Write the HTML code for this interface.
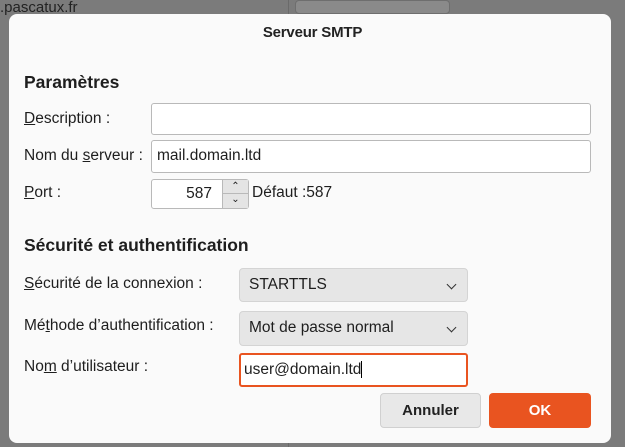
<!DOCTYPE html>
<html><head><meta charset="utf-8"><style>
*{box-sizing:border-box;margin:0;padding:0}
body{width:625px;height:447px;overflow:hidden;background:#7b7b7b;font-family:"Liberation Sans",sans-serif;color:#1e1e1e;position:relative}
.a{position:absolute;white-space:nowrap}
.dlg{position:absolute;left:9px;top:14px;width:602px;height:429px;background:#fafafa;border-radius:8px}
.lab{font-size:15.5px}
.in{position:absolute;background:#fff;border:1px solid #b9b9b9;border-radius:3px;font-size:15.5px;padding-left:5px;line-height:30px}
.sel{position:absolute;background:#e6e6e6;border:1px solid #d4d4d4;border-radius:4px;font-size:15.5px;padding-left:9px;line-height:32px}
.chev{position:absolute;right:12px;top:12px;width:7px;height:7px;border-right:1.2px solid #333;border-bottom:1.2px solid #333;transform:rotate(45deg)}
u{text-decoration:underline}
</style></head><body>
<div class="a" style="left:0;top:-1px;font-size:15px;color:#222">.pascatux.fr</div>
<div class="a" style="left:295px;top:0;width:155px;height:14px;background:#8a8a8a;border-radius:4px;border:1px solid #6e6e6e"></div>
<div class="a" style="left:288px;top:0;width:1px;height:447px;background:#6a6a6a"></div>
<div class="dlg"></div>
<div class="a" style="left:0;width:625px;text-align:center;top:24px;font-size:15px;font-weight:bold;color:#222;letter-spacing:-0.2px">Serveur SMTP</div>
<div class="a" style="left:24px;top:72px;font-size:17.5px;font-weight:bold">Paramètres</div>
<div class="a lab" style="left:24px;top:110px"><u>D</u>escription :</div>
<div class="in" style="left:151px;top:103px;width:440px;height:32px"></div>
<div class="a lab" style="left:24px;top:147px">Nom du <u>s</u>erveur :</div>
<div class="in" style="left:151px;top:140px;width:440px;height:33px">mail.domain.ltd</div>
<div class="a lab" style="left:24px;top:184px"><u>P</u>ort :</div>
<div class="in" style="left:151px;top:179px;width:98px;height:30px;text-align:right;padding-right:36px;line-height:28px">587</div>
<div class="a" style="left:222px;top:180px;width:26px;height:28px;background:#e4e4e4;border-left:1px solid #b9b9b9"><div style="height:14px;border-bottom:1px solid #b9b9b9;text-align:center;font-size:10px;line-height:14px">&#8963;</div><div style="text-align:center;font-size:10px;line-height:12px">&#8964;</div></div>
<div class="a lab" style="left:252px;top:184px">Défaut :587</div>
<div class="a" style="left:24px;top:235px;font-size:17.5px;font-weight:bold">Sécurité et authentification</div>
<div class="a lab" style="left:24px;top:275px"><u>S</u>écurité de la connexion :</div>
<div class="sel" style="left:239px;top:268px;width:229px;height:34px">STARTTLS<div class="chev"></div></div>
<div class="a lab" style="left:24px;top:317px">Mé<u>t</u>hode d’authentification :</div>
<div class="sel" style="left:239px;top:311px;width:229px;height:35px">Mot de passe normal<div class="chev"></div></div>
<div class="a lab" style="left:24px;top:358px">No<u>m</u> d’utilisateur :</div>
<div class="in" style="left:239px;top:353px;width:229px;height:34px;border:2px solid #e95420;line-height:29px;padding-left:3px">user@domain.ltd<span style="display:inline-block;width:1px;height:17px;background:#000;vertical-align:middle"></span></div>
<div class="a" style="left:380px;top:393px;width:101px;height:35px;background:#e8e8e8;border:1px solid #d0d0d0;border-radius:4px;text-align:center;line-height:33px;font-size:15px;font-weight:bold;color:#222">Annuler</div>
<div class="a" style="left:489px;top:393px;width:102px;height:35px;background:#e95420;border-radius:4px;text-align:center;line-height:35px;font-size:15px;font-weight:bold;color:#fff">OK</div>
</body></html>
